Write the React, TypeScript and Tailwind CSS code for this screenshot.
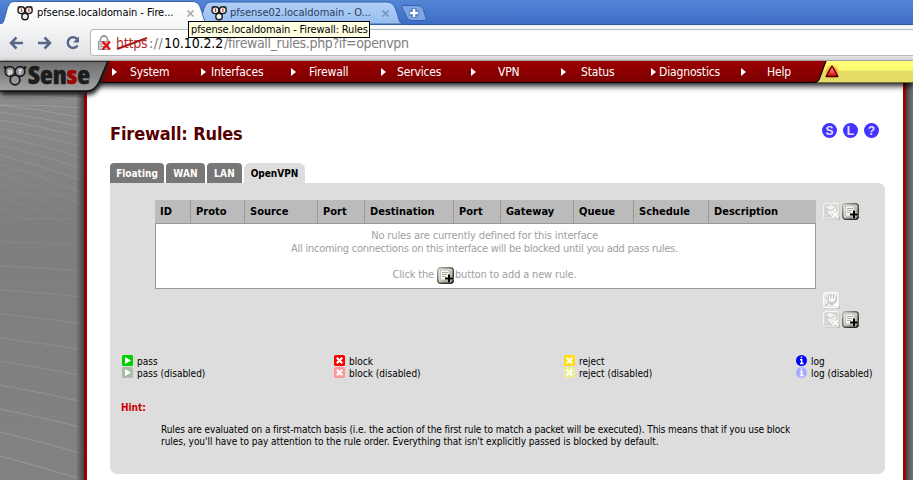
import React from 'react';

const menu = [
  { label: 'System', arrow: 'ml-[112px]', gap: 'ml-[13px]', text: 'w-[71px]' },
  { label: 'Interfaces', arrow: '', gap: 'ml-[5px]', text: 'w-[80px]' },
  { label: 'Firewall', arrow: '', gap: 'ml-[13px]', text: 'w-[72px]' },
  { label: 'Services', arrow: '', gap: 'ml-[11px]', text: 'w-[74px]' },
  { label: 'VPN', arrow: '', gap: 'ml-[22px]', text: 'w-[63px]' },
  { label: 'Status', arrow: '', gap: 'ml-[15px]', text: 'w-[70px]' },
  { label: 'Diagnostics', arrow: '', gap: 'ml-[3px]', text: 'w-[82px]' },
  { label: 'Help', arrow: '', gap: 'ml-[21px]', text: 'w-[50px]' },
];

const columns = [
  { label: 'ID', width: 'w-[36px]' },
  { label: 'Proto', width: 'w-[54px]' },
  { label: 'Source', width: 'w-[73px]' },
  { label: 'Port', width: 'w-[47px]' },
  { label: 'Destination', width: 'w-[89px]' },
  { label: 'Port', width: 'w-[47px]' },
  { label: 'Gateway', width: 'w-[73px]' },
  { label: 'Queue', width: 'w-[60px]' },
  { label: 'Schedule', width: 'w-[75px]' },
  { label: 'Description', width: 'w-[107px]' },
];

const legend = [
  { kind: 'play', label: 'pass', on: '#00d000', off: '#a9bda9', width: 'w-[212px]' },
  { kind: 'cross', label: 'block', on: '#ff0000', off: '#ff9999', width: 'w-[230px]' },
  { kind: 'cross', label: 'reject', on: '#ffdd11', off: '#eeee99', width: 'w-[232px]' },
  { kind: 'info', label: 'log', on: '#0000ff', off: '#aaaaff', width: 'w-[85px]' },
];

// Start and end heights of the light streaks in the steel backdrop.
const steepStreaks = [[13, 16], [22, 25], [22, 35], [29, 44], [37, 54], [45, 64], [53, 75], [62, 86], [72, 98], [81, 110], [91, 122], [102, 135], [113, 148], [125, 162]];
const flatStreaks = [[111, 111], [136, 136], [159, 162], [183, 188], [207, 214], [231, 241], [255, 267], [278, 293], [302, 319], [326, 345], [349, 371], [373, 397]];

function Paw({ size, className = '' }: { size: number; className?: string }) {
  return (
    <svg width={size} height={size} viewBox="0 0 16 16" className={`shrink-0 ${className}`}>
      <g fill="#f4f0f0" stroke="#191919" strokeWidth="1.4">
        <circle cx="8" cy="11.5" r="3.2" />
        <circle cx="4.4" cy="5.2" r="3.4" />
        <circle cx="11.8" cy="5.2" r="3.4" />
      </g>
      <circle cx="1.6" cy="2.2" r="1" fill="#222" />
      <circle cx="14.4" cy="2.2" r="1" fill="#222" />
      <path d="M4.5 3.500v3.500M11.900 3.500v3.500" stroke="#c43a3a" strokeWidth="1.2" />
    </svg>
  );
}

function AddIcon() {
  return (
    <svg width="17" height="17" viewBox="0 0 17 17" className="shrink-0">
      <defs>
        <linearGradient id="addFace" x1="0" y1="0" x2="1" y2="1">
          <stop offset="0" stopColor="#f4f4f0" />
          <stop offset="0.5" stopColor="#cfcfc7" />
          <stop offset="1" stopColor="#6d6d64" />
        </linearGradient>
        <linearGradient id="addRim" x1="0" y1="0" x2="1" y2="1">
          <stop offset="0" stopColor="#b5b5ae" />
          <stop offset="0.5" stopColor="#55554c" />
          <stop offset="1" stopColor="#11110c" />
        </linearGradient>
      </defs>
      <rect x="0.7" y="0.7" width="15.6" height="15.6" rx="3" fill="url(#addFace)" stroke="url(#addRim)" strokeWidth="1.4" />
      <rect x="3.500" y="3" width="8.500" height="10" fill="#f6f6f2" stroke="#aaaaa2" strokeWidth="0.6" />
      <path d="M5 5.500h6M5 7.500h5M5 9.500h4" stroke="#a5a59c" strokeWidth="0.9" />
      <path d="M12 6.500v9.500M7.500 11.500h9" stroke="#fff" strokeWidth="3.4" opacity="0.5" />
      <path d="M12 7.500v8M8 11.500h8" stroke="#000" strokeWidth="2.100" />
    </svg>
  );
}

function DeleteIcon() {
  return (
    <svg width="17" height="17" viewBox="0 0 17 17" className="shrink-0">
      <rect x="1" y="1" width="16" height="16" rx="2.5" fill="#a9a9a5" />
      <rect x="0.5" y="0.5" width="15.5" height="15.5" rx="2.5" fill="#d8d8d4" stroke="#f6f6f4" />
      <path d="M3 5l4.500-3 5.500 3v7l-5 1.500-4-3.500z" fill="#f3f3f0" />
      <path d="M3.500 5.500l4 2 4.500-2.500M3.500 5.500l1 5 3.500 2.500" fill="none" stroke="#b9b9b4" strokeWidth="0.9" />
      <path d="M9.500 9l5.500 5.500M15 9l-5.500 5.500" stroke="#b0b0ac" strokeWidth="3" />
      <path d="M9.500 9l5.500 5.500M15 9l-5.500 5.500" stroke="#fff" strokeWidth="2.200" />
    </svg>
  );
}

function MoveIcon() {
  return (
    <svg width="17" height="17" viewBox="0 0 17 17" className="shrink-0">
      <rect x="1" y="1" width="16" height="16" rx="2.5" fill="#adadaa" />
      <rect x="0.5" y="0.5" width="15.5" height="15.5" rx="2.5" fill="#ecece9" stroke="#fdfdfd" />
      <path d="M3 4.500l3 5 3 1.500 4-2.500V4" fill="#f8f8f6" stroke="#b5b5b2" strokeWidth="1" />
      <path d="M5.500 2.500v4M8 2v4.500M10.500 2.500v4" stroke="#b8b8b4" strokeWidth="1" />
      <path d="M2 14l4-3.500M7 11.500c3 2 5 0 7-3" fill="none" stroke="#aaa" strokeWidth="1" />
      <path d="M9.500 13.500l5.500-5v6z" fill="#fff" />
    </svg>
  );
}

function LegendIcon({ kind, color }: { kind: string; color: string }) {
  return (
    <svg width="11" height="11" viewBox="0 0 11 11" className="shrink-0">
      {kind === 'info' ? <circle cx="5.5" cy="5.5" r="5.5" fill={color} /> : <rect width="11" height="11" rx="1.5" fill={color} />}
      {kind === 'play' && <path d="M3 2l6 3.5L3 9z" fill="#fff" />}
      {kind === 'cross' && <path d="M2.8 2.8l5.4 5.4M8.2 2.8L2.8 8.2" stroke="#fff" strokeWidth="2.1" />}
      {kind === 'info' && <path d="M5.500 1.600v1.700M4 4.700h1.700v3.600M4 8.500h3.500" fill="none" stroke="#fff" strokeWidth="1.400" />}
    </svg>
  );
}

function Badge({ children }: { children: string }) {
  return (
    <span className="flex size-[15px] items-center justify-center rounded-full bg-[#4433ff] font-['Liberation_Sans',sans-serif] text-[12px] font-bold leading-none text-[#e4e0ff]">
      {children}
    </span>
  );
}

function TabStrip() {
  return (
    <div className="relative h-[25px] bg-linear-to-b from-[#5385d5] to-[#3f6cc6]">
      <svg width="913" height="25" className="absolute left-0 top-0">
        <defs>
          <linearGradient id="activeTab" x1="0" y1="0" x2="0" y2="1">
            <stop offset="0" stopColor="#fff" />
            <stop offset="1" stopColor="#f6f7f8" />
          </linearGradient>
          <linearGradient id="idleTab" x1="0" y1="0" x2="0" y2="1">
            <stop offset="0" stopColor="#b2d0f7" />
            <stop offset="1" stopColor="#96bdee" />
          </linearGradient>
        </defs>
        <path d="M0 24.500h913" stroke="#2e57a5" />
        <path d="M197 24c6-1 5-22 13-22h176c8 0 9 5 12 14 1 5 2 8 6 8z" fill="url(#idleTab)" stroke="#3564b0" />
        <path d="M-1 25c5-1 5-5 7-12C8 6 9 1.500 15 1.500h177c7 0 8 5 10 11 2 7 3 12 8 12.500z" fill="url(#activeTab)" stroke="#3b66ac" />
        <rect x="0" y="24" width="208" height="1" fill="#f6f7f8" />
        <path d="M402 7.500q-1-2 2-2h14q4 0 5 3l3 9q1 3-2 3h-12q-4 0-5-3z" fill="#7fa4e2" stroke="#315eaf" />
        <path d="M414 8.500v9M409.500 13h9" stroke="#3e6cb6" strokeWidth="5" />
        <path d="M414 9v8M410 13h8" stroke="#fff" strokeWidth="2.500" />
      </svg>
      <div className="relative flex h-[25px] items-center whitespace-nowrap pl-[17px] pt-px text-[11px]">
        <Paw size={16} />
        <span className="ml-[4px] w-[149px] tracking-[-0.08px] text-black">pfsense.localdomain - Fire...</span>
        <svg width="9" height="9" viewBox="0 0 9 9" className="shrink-0"><path d="M1.500 1.500l6 6M7.500 1.500l-6 6" stroke="#aaa" strokeWidth="1.700" /></svg>
        <Paw size={16} className="ml-[16px]" />
        <span className="ml-[3px] w-[151px] text-[#2b3e5c]">pfsense02.localdomain - O...</span>
        <svg width="9" height="9" viewBox="0 0 9 9" className="shrink-0"><path d="M1.500 1.500l6 6M7.500 1.500l-6 6" stroke="#7793bd" strokeWidth="1.700" /></svg>
      </div>
      <div className="absolute left-[188px] top-[21px] z-30 flex h-[17px] w-[182px] items-center whitespace-nowrap border border-black bg-[#ffffe1] pl-[2px] pt-px text-[11px] tracking-[-0.14px] text-black">
        pfsense.localdomain - Firewall: Rules
      </div>
    </div>
  );
}

function Toolbar() {
  return (
    <div className="flex h-[36px] items-start border-b border-[#b5b5ba] bg-linear-to-b from-[#f6f7f8] to-[#e0e0e2] pt-[4px]">
      <svg width="90" height="27" className="shrink-0" fill="none" stroke="#56678a" strokeWidth="2.500">
        <path d="M23 14H11M16.500 8.500L11 14l5.500 5.500" />
        <path d="M38 14h12M44.500 8.500L50 14l-5.500 5.500" />
        <path d="M77 10A5.300 5.300 0 1 0 77.500 16.500" />
        <path d="M79 7.500v6h-6z" fill="#56678a" stroke="none" />
      </svg>
      <div className="flex h-[27px] flex-1 items-center rounded-l-[4px] border border-r-0 border-[#b7b9bd] bg-white pl-[7px] pt-[2px] text-[14px]">
        <svg width="13" height="16" viewBox="0 0 13 16" className="mb-[2px] shrink-0">
          <path d="M2.500 8V4.500a3.500 3.500 0 0 1 7 0V8" fill="none" stroke="#999" strokeWidth="1.800" />
          <rect x="0.500" y="6.500" width="10" height="8" fill="#d8d8d8" stroke="#999" />
          <path d="M1 9h9M1 11.500h9" stroke="#aaa" />
          <path d="M4.500 6.500l7.500 8M12 6.500l-7.500 8" stroke="#e01015" strokeWidth="2.300" />
        </svg>
        <span className="relative ml-[5px] w-[33px] whitespace-nowrap tracking-[-0.2px] text-[#b02a2a]">
          https
          <svg width="34" height="16" className="absolute left-0 top-[3px]"><path d="M1 13L31 2" stroke="#a81c1c" strokeWidth="1.900" /></svg>
        </span>
        <span className="w-[15px] tracking-[0.5px] text-[#777]">://</span>
        <span className="w-[60px] tracking-[-0.1px] text-black">10.10.2.2</span>
        <span className="tracking-[-0.35px] text-[#808080]">/firewall_rules.php?if=openvpn</span>
      </div>
    </div>
  );
}

function NavBar() {
  return (
    <div className="relative z-10 flex h-[22px] items-center border-b border-black bg-linear-to-b from-[#9b0000] to-[#7d0000] text-[12px] text-white shadow-[0_3px_6px_rgba(0,0,0,0.9)]">
      {menu.map((m) => (
        <div key={m.label} className={`flex items-center ${m.arrow}`}>
          <svg width="5" height="8" className="shrink-0"><path d="M0 0l5 4-5 4z" fill="#fff" /></svg>
          <span className={`whitespace-nowrap tracking-[-0.15px] ${m.gap} ${m.text}`}>{m.label}</span>
        </div>
      ))}
      <svg width="98" height="22" className="absolute right-0 top-0">
        <defs>
          <linearGradient id="alertBar" x1="0" y1="0" x2="0" y2="1">
            <stop offset="0" stopColor="#ffff78" />
            <stop offset="0.400" stopColor="#fcf971" />
            <stop offset="0.500" stopColor="#e2dc66" />
            <stop offset="1" stopColor="#e2dc66" />
          </linearGradient>
          <radialGradient id="alertGlow">
            <stop offset="0.400" stopColor="#ff7100" />
            <stop offset="1" stopColor="#ffdc50" stopOpacity="0" />
          </radialGradient>
          <linearGradient id="alertFace" x1="0" y1="0" x2="0" y2="1">
            <stop offset="0" stopColor="#ffb0b0" />
            <stop offset="1" stopColor="#e00000" />
          </linearGradient>
        </defs>
        <path d="M0 21.500c4-1 5-5 7-11L11 0h87v21.500z" fill="url(#alertBar)" />
        <path d="M0 21.500c4-1 5-5 7-11L11 0" fill="none" stroke="#190000" strokeWidth="1.300" />
        <circle cx="17" cy="11" r="8.500" fill="url(#alertGlow)" />
        <path d="M17 5l6 10.500H11z" fill="url(#alertFace)" stroke="#3c0000" strokeWidth="1.300" strokeLinejoin="round" />
      </svg>
    </div>
  );
}

function Logo() {
  return (
    <svg width="120" height="42" className="absolute left-0 top-[61px] z-20">
      <defs>
        <linearGradient id="logoFace" x1="0" y1="0" x2="0" y2="1">
          <stop offset="0" stopColor="#6c6c6c" />
          <stop offset="1" stopColor="#a4a4a4" />
        </linearGradient>
        <filter id="logoShade" x="-10%" y="-10%" width="120%" height="150%"><feGaussianBlur stdDeviation="2" /></filter>
      </defs>
      <path d="M0 0h108l-9 22q-4 9-12 9H0z" fill="#222" filter="url(#logoShade)" transform="translate(1 3)" />
      <path d="M-1 0h109l-9 21q-4 9-12 9H-1z" fill="url(#logoFace)" stroke="#101010" strokeWidth="1.500" />
      <g fill="#969696" stroke="#1c1c1c" strokeWidth="1.700">
        <circle cx="15" cy="19" r="4.800" />
        <circle cx="10" cy="10.500" r="4.800" />
        <circle cx="20" cy="10.500" r="4.800" />
      </g>
      <circle cx="5" cy="6.500" r="1.500" fill="#1c1c1c" />
      <circle cx="25" cy="6.500" r="1.500" fill="#1c1c1c" />
      <text x="10" y="12.500" textAnchor="middle" fontSize="7" fontWeight="700" fill="#eee">p</text>
      <text x="20" y="13" textAnchor="middle" fontSize="7" fontWeight="700" fill="#eee">f</text>
      <text x="28" y="22.500" fontFamily="Open Sans, sans-serif" fontSize="24" fontWeight="800" textLength="62" lengthAdjust="spacingAndGlyphs" fill="#1c1c1c" stroke="#1c1c1c" strokeWidth="0.500">
        Sen<tspan fill="#9c0505" stroke="#9c0505">s</tspan>e
      </text>
    </svg>
  );
}

function Backdrop() {
  return (
    <svg width="84" height="398" className="block">
      <defs>
        <linearGradient id="steel" x1="0" y1="0" x2="0" y2="1"><stop offset="0" stopColor="#8c8c8c" /><stop offset="0.350" stopColor="#7e7e7e" /><stop offset="1" stopColor="#828282" /></linearGradient>
        <linearGradient id="edge"><stop offset="0" stopColor="#333" stopOpacity="0" /><stop offset="1" stopColor="#333" stopOpacity="0.800" /></linearGradient>
      </defs>
      <rect width="84" height="398" fill="url(#steel)" />
      {steepStreaks.map(([a, b], i) => (
        <path key={i} d={`M0 ${a}Q42 ${(a + b) / 2 - 2} 84 ${b}`} fill="none" stroke="#bbb" strokeOpacity={0.4 - i * 0.022} />
      ))}
      {flatStreaks.map(([a, b], i) => (
        <path key={i} d={`M0 ${a}Q42 ${(a + b) / 2 - 1} 84 ${b}`} fill="none" stroke="#bbb" strokeOpacity={0.08 + i * 0.03} />
      ))}
      <rect x="76" width="8" height="398" fill="url(#edge)" />
    </svg>
  );
}

function RulesTable() {
  return (
    <div className="w-[661px]">
      <div className="flex h-[23px] bg-[#bbb] text-[11px] font-bold">
        {columns.map((c, i) => (
          <div key={i} className={`flex items-center border-[#999] pl-[5px] pt-[2px] ${c.width} ${i < columns.length - 1 ? 'border-r' : ''}`}>
            {c.label}
          </div>
        ))}
      </div>
      <div className="h-[66px] border border-[#999] bg-white pr-[2px] pt-[5px] text-center text-[11px] leading-[13px] text-[#a0a0a0]">
        <p className="tracking-[-0.13px]">No rules are currently defined for this interface</p>
        <p className="tracking-[-0.26px]">All incoming connections on this interface will be blocked until you add pass rules.</p>
        <p className="mt-[11px] flex h-[17px] items-center justify-center tracking-[-0.17px]">
          <span>Click the</span><span className="ml-[3px] mr-[1px] pt-[2px]"><AddIcon /></span><span>button to add a new rule.</span>
        </p>
      </div>
    </div>
  );
}

function Content() {
  return (
    <main className="h-[398px] w-[822px] border-x-[3px] border-[#990000] bg-white pl-[23px] pt-[40px]">
      <div className="flex h-[40px] w-[775px] items-start justify-between">
        <h1 className="text-[18px] font-bold leading-[22px] tracking-[-0.15px] text-[#560000]">Firewall: Rules</h1>
        <div className="mr-[6px] flex gap-[6px]"><Badge>S</Badge><Badge>L</Badge><Badge>?</Badge></div>
      </div>
      <div className="flex h-[20px] gap-[2px] text-[10px] font-bold text-white">
        <span className="flex w-[54px] items-center justify-center rounded-t-[4px] bg-[#777] pt-px">Floating</span>
        <span className="flex w-[39px] items-center justify-center rounded-t-[4px] bg-[#777] pt-px tracking-[0.2px]">WAN</span>
        <span className="flex w-[35px] items-center justify-center rounded-t-[4px] bg-[#777] pt-px tracking-[0.2px]">LAN</span>
        <span className="flex w-[61px] items-center justify-center rounded-t-[6px] bg-[#ddd] pt-px text-black">OpenVPN</span>
      </div>
      <section className="h-[291px] w-[775px] rounded-[7px] rounded-tl-none bg-[#ddd] pt-[17px]">
        <div className="flex h-[155px] pl-[45px]">
          <RulesTable />
          <div className="ml-[7px] flex flex-col pt-[3px]">
            <div className="flex gap-[2px]"><DeleteIcon /><AddIcon /></div>
            <div className="mt-[72px]"><MoveIcon /></div>
            <div className="mt-[2px] flex gap-[2px]"><DeleteIcon /><AddIcon /></div>
          </div>
        </div>
        <div className="flex pl-[12px] text-[10px] leading-[14px] text-black">
          {legend.map((item) => (
            <div key={item.label} className={item.width}>
              <div className="flex h-[12px] gap-[4px] whitespace-nowrap"><LegendIcon kind={item.kind} color={item.on} /><span>{item.label}</span></div>
              <div className="flex h-[12px] gap-[4px] whitespace-nowrap"><LegendIcon kind={item.kind} color={item.off} /><span>{item.label} (disabled)</span></div>
            </div>
          ))}
        </div>
        <div className="mt-[23px] pl-[11px] text-[10px] leading-[12px] text-black">
          <p className="font-bold text-[#c00]">Hint:</p>
          <p className="mt-[10px] whitespace-nowrap pl-[40px]">
            <span className="tracking-[-0.1px]">Rules are evaluated on a first-match basis (i.e. the action of the first rule to match a packet will be executed). This means that if you use block</span><br />
            <span className="tracking-[-0.035px]">rules, you'll have to pay attention to the rule order. Everything that isn't explicitly passed is blocked by default.</span>
          </p>
        </div>
      </section>
    </main>
  );
}

export default function App() {
  return (
    <div className="relative h-[480px] w-[913px] overflow-hidden bg-[#777] font-['DejaVu_Sans_Condensed','DejaVu_Sans',sans-serif] [font-stretch:condensed]">
      <TabStrip />
      <Toolbar />
      <NavBar />
      <Logo />
      <div className="flex">
        <Backdrop />
        <Content />
        <div className="h-[398px] w-[7px] bg-linear-to-r from-[#444] to-[#777]" />
      </div>
    </div>
  );
}
